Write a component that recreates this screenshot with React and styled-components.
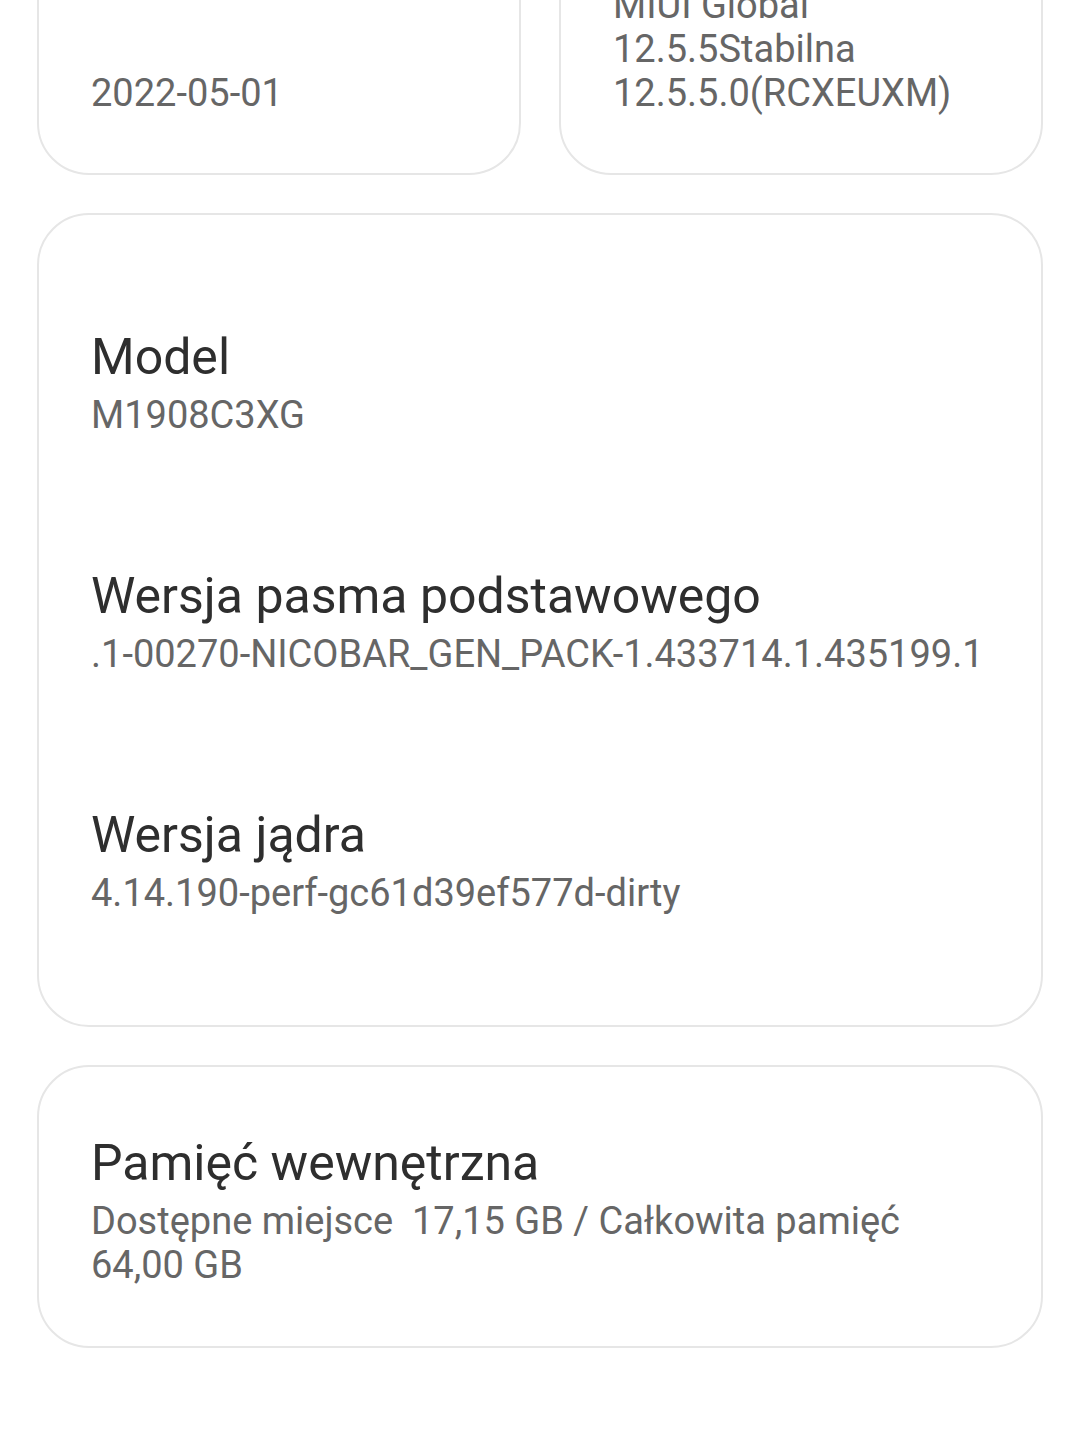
import styled, { createGlobalStyle } from "styled-components";

const GlobalStyle = createGlobalStyle`
  html, body {
    margin: 0;
    padding: 0;
    background: #ffffff;
  }
  body {
    font-family: Roboto, "Noto Sans", "Liberation Sans", sans-serif;
    -webkit-font-smoothing: antialiased;
  }
`;

const Page = styled.div`
  width: 1080px;
  height: 1440px;
  overflow: hidden;
  box-sizing: border-box;
  padding: 0 37px;
`;

const Scroller = styled.div`
  display: flex;
  flex-direction: column;
  gap: 38px;
  margin-top: -125px;
`;

const TopRow = styled.div`
  display: grid;
  grid-template-columns: 1fr 1fr;
  gap: 38px;
`;

const Card = styled.div`
  background: #ffffff;
  border: 2px solid #e6e6e6;
  border-radius: 52px;
  box-sizing: border-box;
  padding: ${(p) => p.$pad || "0 52px"};
`;

const SmallCard = styled(Card)`
  height: 300px;
  display: flex;
  flex-direction: column;
  justify-content: flex-end;
  padding: 0 52px 58px;
`;

const Item = styled.div`
  display: flex;
  flex-direction: column;
  gap: 8px;
`;

const Title = styled.div`
  font-size: 50px;
  line-height: 56px;
  color: #2e2e2e;
  white-space: nowrap;
`;

const Value = styled.div`
  font-size: 38px;
  line-height: 44px;
  color: #666666;
  white-space: ${(p) => (p.$wrap ? "normal" : "nowrap")};
`;

const ItemList = styled.div`
  display: flex;
  flex-direction: column;
  gap: 131px;
`;

const items = [
  { title: "Model", value: "M1908C3XG" },
  {
    title: "Wersja pasma podstawowego",
    value: ".1-00270-NICOBAR_GEN_PACK-1.433714.1.435199.1",
  },
  { title: "Wersja jądra", value: "4.14.190-perf-gc61d39ef577d-dirty" },
];

export default function App() {
  return (
    <Page>
      <GlobalStyle />
      <Scroller>
        <TopRow>
          <SmallCard>
            <Value>2022-05-01</Value>
          </SmallCard>
          <SmallCard>
            <Value>MIUI Global</Value>
            <Value>12.5.5Stabilna</Value>
            <Value>12.5.5.0(RCXEUXM)</Value>
          </SmallCard>
        </TopRow>
        <Card $pad="114px 52px 110px">
          <ItemList>
            {items.map((it) => (
              <Item key={it.title}>
                <Title>{it.title}</Title>
                <Value>{it.value}</Value>
              </Item>
            ))}
          </ItemList>
        </Card>
        <Card $pad="68px 52px 59px">
          <Item>
            <Title>Pamięć wewnętrzna</Title>
            <Value $wrap>
              Dostępne miejsce&nbsp; 17,15 GB / Całkowita pamięć 64,00&nbsp;GB
            </Value>
          </Item>
        </Card>
      </Scroller>
    </Page>
  );
}
